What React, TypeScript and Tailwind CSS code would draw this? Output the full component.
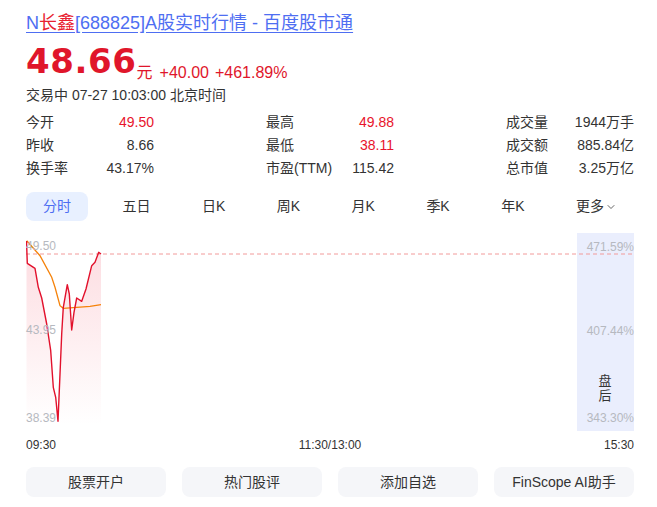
import { ChevronDown } from 'lucide-react';

const stats = [
  [
    { label: '今开', value: '49.50', up: true },
    { label: '昨收', value: '8.66' },
    { label: '换手率', value: '43.17%' },
  ],
  [
    { label: '最高', value: '49.88', up: true },
    { label: '最低', value: '38.11', up: true },
    { label: '市盈(TTM)', value: '115.42' },
  ],
  [
    { label: '成交量', value: '1944万手' },
    { label: '成交额', value: '885.84亿' },
    { label: '总市值', value: '3.25万亿' },
  ],
];

const tabs = ['分时', '五日', '日K', '周K', '月K', '季K', '年K'];

const redLine =
  '0.5,8 1.3,30.3 9,35.3 12.3,54.3 15.7,65 20.7,91 24.7,117.7 27.3,154.3 29.7,164.3 32,188.3 35.7,101 37.3,74.3 41.3,51.7 43.3,61 45.7,97 48,79.3 50.7,65 55.7,68.3 60,56 65.7,32.7 69,29.3 72.7,19.3 75,21';
const avgLine = '0.7,7.7 14,22.7 25.7,44.3 29,54.3 34,72.7 37.3,75.3 50.7,74.3 64,73.3 75,71.7';

export default function App() {
  return (
    <div className="w-[657px] h-[507px] bg-white pl-[26px] pr-[23px] pt-[10px] text-[#333] font-['Liberation_Sans','Noto_Sans_CJK_SC',sans-serif]">
      <a className="block text-[18px] leading-[26px] text-[#4e6ef2] underline underline-offset-[3px]">
        N<span className="text-[#e8202f]">长鑫</span>[688825]A股实时行情 - 百度股市通
      </a>

      <div className="flex items-end mt-[9px] text-[#e0162b]">
        <span className="text-[34px] leading-[33px] font-bold tracking-[0.6px] font-['DejaVu_Sans',sans-serif]">48.66</span>
        <span className="text-[16px] leading-[16px] mb-[-3px]">元</span>
        <span className="text-[16px] leading-[16px] mb-[-3px] ml-[7px]">+40.00</span>
        <span className="text-[16px] leading-[16px] mb-[-3px] ml-[6px]">+461.89%</span>
      </div>

      <div className="mt-[7px] text-[14px] leading-[20px]">交易中 07-27 10:03:00 北京时间</div>

      <div className="flex justify-between mt-[6px] text-[14px] leading-[23px]">
        {stats.map((col, i) => (
          <div key={i} className="w-[128px]">
            {col.map((s) => (
              <div key={s.label} className="flex justify-between">
                <span>{s.label}</span>
                <span className={s.up ? 'text-[#e8142c]' : ''}>{s.value}</span>
              </div>
            ))}
          </div>
        ))}
      </div>

      <div className="flex justify-between mt-[12px] text-[14px]">
        {tabs.map((t, i) => (
          <div
            key={t}
            className={
              i === 0
                ? 'h-[29px] px-[17px] flex items-center rounded-lg bg-[#e8f0ff] text-[#4e6ef2]'
                : 'h-[29px] px-[17px] flex items-center'
            }
          >
            {t}
          </div>
        ))}
        <div className="h-[29px] px-[17px] flex items-center">
          更多
          <ChevronDown size={12} strokeWidth={1.5} className="ml-[1px] mt-[1px]" />
        </div>
      </div>

      <div className="relative h-[198px] mt-[12px]">
        <svg width="608" height="198" viewBox="0 0 608 198" className="absolute inset-0">
          <defs>
            <linearGradient id="fill" x1="0" y1="0" x2="0" y2="1">
              <stop offset="0" stopColor="#f0304a" stopOpacity="0.17" />
              <stop offset="1" stopColor="#f0304a" stopOpacity="0" />
            </linearGradient>
          </defs>
          <rect x="551" y="0" width="57" height="198" fill="#eaeefd" />
          <path d={`M${redLine.split(' ').join(' L')} L75,192 L0.5,192 Z`} fill="url(#fill)" />
          <line x1="0" y1="21" x2="608" y2="21" stroke="#f29a9a" strokeWidth="1" strokeDasharray="4 3" />
          <polyline points={avgLine} fill="none" stroke="#f5820a" strokeWidth="1.3" />
          <polyline points={redLine} fill="none" stroke="#e2112c" strokeWidth="1.4" strokeLinejoin="round" />
        </svg>
        <div className="absolute left-0 top-[6px] text-[12px] leading-[14px] text-[#b6b9c0]">49.50</div>
        <div className="absolute left-0 top-[90px] text-[12px] leading-[14px] text-[#b6b9c0]">43.95</div>
        <div className="absolute left-0 top-[178px] text-[12px] leading-[14px] text-[#b6b9c0]">38.39</div>
        <div className="absolute right-0 top-[7px] text-[12px] leading-[14px] text-[#b6b9c0]">471.59%</div>
        <div className="absolute right-0 top-[91px] text-[12px] leading-[14px] text-[#b6b9c0]">407.44%</div>
        <div className="absolute right-0 top-[178px] text-[12px] leading-[14px] text-[#b6b9c0]">343.30%</div>
        <div className="absolute left-[572px] top-[140px] w-[14px] flex flex-col items-center text-[13px] leading-[15px]">
          <span>盘</span>
          <span>后</span>
        </div>
      </div>

      <div className="flex justify-between mt-[6px] text-[12px] leading-[16px]">
        <span>09:30</span>
        <span>11:30/13:00</span>
        <span>15:30</span>
      </div>

      <div className="grid grid-cols-4 gap-4 mt-[14px] text-[14px]">
        {['股票开户', '热门股评', '添加自选', 'FinScope AI助手'].map((b) => (
          <div key={b} className="h-[30px] flex items-center justify-center rounded-lg bg-[#f5f6f9]">
            {b}
          </div>
        ))}
      </div>
    </div>
  );
}
